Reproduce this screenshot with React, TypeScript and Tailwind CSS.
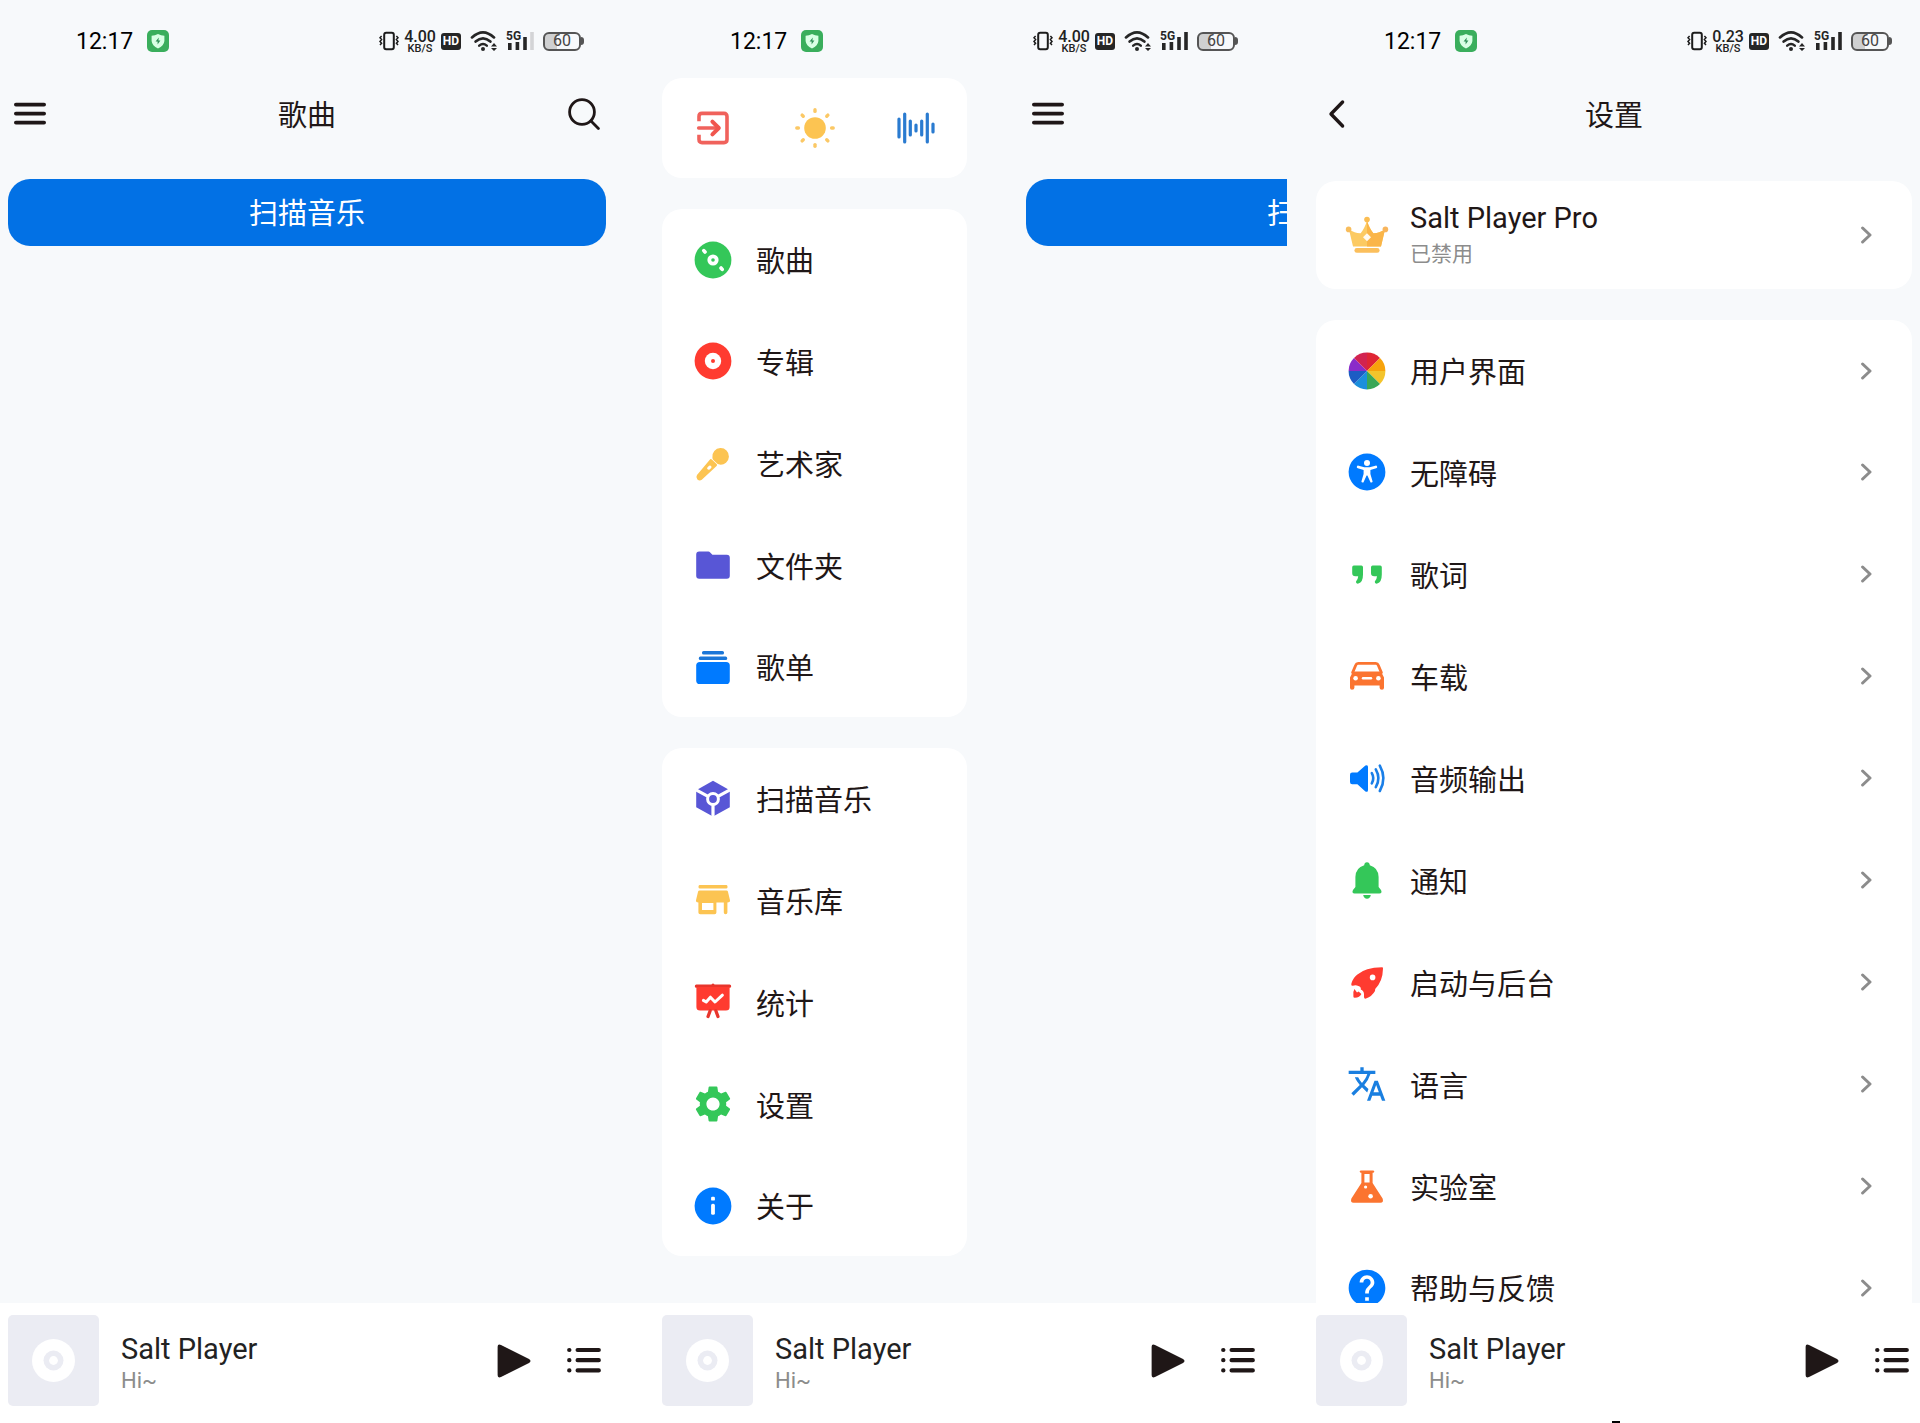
import type { ReactNode } from 'react'
import { MdHelp, MdSettings, MdTranslate } from 'react-icons/md'

const GREEN = '#34c759'
const RED = '#ff3b30'
const YELLOW = '#fcc452'
const PURPLE = '#5856d6'
const BLUE = '#007aff'
const ORANGE = '#fb7430'
const INK = '#1f1717'

/** 38px icon canvas with the origin in the middle. */
function Glyph({ children }: { children: ReactNode }) {
  return (
    <svg
      viewBox="-19 -19 38 38"
      className="size-[38px] shrink-0 overflow-visible"
      fill="none"
      strokeLinecap="round"
      strokeLinejoin="round"
      aria-hidden="true"
    >
      {children}
    </svg>
  )
}

/** Wraps a package icon so that it takes the same room as a Glyph. */
function Slot({ children }: { children: ReactNode }) {
  return (
    <span className="flex size-[38px] shrink-0 items-center justify-center">
      <span className="shrink-0">{children}</span>
    </span>
  )
}

const SongIcon = () => (
  <Glyph>
    <circle r="18.4" fill={GREEN} />
    <circle r="5.6" fill="#fff" />
    <circle r="1.8" fill={GREEN} />
    <path d="M-9.2 -9.4 L-8 -8 M8 8 L9.2 9.4" stroke="#fff" strokeWidth="3.6" />
  </Glyph>
)

const AlbumIcon = () => (
  <Glyph>
    <circle r="18.4" fill={RED} />
    <circle r="8.2" fill="#fff" />
    <circle r="2" fill={RED} />
  </Glyph>
)

const ArtistIcon = () => (
  <Glyph>
    <path d="M-0.6 -5.6 A8.3 8.3 0 1 1 6.6 1.6 Q4.6 1.4 3 -0.4 L0.6 -2.8 Q-0.7 -4.2 -0.6 -5.6 Z" fill={YELLOW} />
    <path
      fillRule="evenodd"
      d="M-2.8 -3.8 Q-2 -4.4 -1.2 -3.6 L3.6 1.1 Q4.6 2.1 3.6 3 L-11.2 16.8 Q-13.4 18.4 -15.6 16.6 Q-17.6 14.4 -16 12 Z M-5.6 4.4 a1.5 1.5 0 0 0 2.2 2 l1.6 -1.5 a1.5 1.5 0 0 0 -2.1 -2.1 Z"
      fill={YELLOW}
    />
  </Glyph>
)

const FolderIcon = () => (
  <Glyph>
    <path
      d="M-16.8 -10.4 Q-16.8 -13.4 -13.8 -13.4 H-4.6 Q-3.6 -13.4 -2.8 -12.6 L-0.6 -10.2 H13.8 Q16.8 -10.2 16.8 -7.2 V10.8 Q16.8 13.8 13.8 13.8 H-13.8 Q-16.8 13.8 -16.8 10.8 Z"
      fill={PURPLE}
    />
  </Glyph>
)

const PlaylistIcon = () => (
  <Glyph>
    <rect x="-11" y="-16" width="22" height="3.6" rx="1.6" fill="#1a76d8" />
    <rect x="-14.2" y="-10.4" width="28.4" height="3.4" rx="1.6" fill="#1a76d8" />
    <rect x="-16.8" y="-5" width="33.6" height="22" rx="3.6" fill={BLUE} />
  </Glyph>
)

const ScanIcon = () => (
  <Glyph>
    <path d="M0 -18.2 L16.8 -8.8 V8.2 L0 17.6 L-16.8 8.2 V-8.8 Z" fill={PURPLE} />
    <path d="M-17.4 -9.4 L-5 -2.6 M17.4 -9.4 L5 -2.6 M0 5 V18" stroke="#fff" strokeWidth="3.2" strokeLinecap="butt" />
    <circle r="5.4" fill={PURPLE} stroke="#fff" strokeWidth="3" />
  </Glyph>
)

const LibraryIcon = () => (
  <Glyph>
    <rect x="-14.4" y="-15" width="28.8" height="3.4" rx="1.2" fill={YELLOW} />
    <path
      fillRule="evenodd"
      d="M-13.4 -9.6 H13.4 Q14.6 -9.6 14.9 -8.4 L17 0.2 Q17.2 2.4 14.4 2.4 V12.6 Q14.4 14.2 12.6 14.2 Q10.8 14.2 10.8 12.6 V2.4 H3.4 V12.4 Q3.4 14.2 1.6 14.2 H-12.8 Q-14.6 14.2 -14.6 12.4 V2.4 Q-17.2 2.4 -17 0.2 L-14.9 -8.4 Q-14.6 -9.6 -13.4 -9.6 Z M-11 3 V10 H0.4 V3 Z"
      fill={YELLOW}
    />
  </Glyph>
)

const StatsIcon = () => (
  <Glyph>
    <path d="M-16.6 -15.8 H16.6 M0 -17 V-15" stroke="#e8352c" strokeWidth="3.2" />
    <path d="M-16.6 -15 H16.6 V5 Q16.6 8.6 13 8.6 H-13 Q-16.6 8.6 -16.6 5 Z" fill={RED} />
    <path d="M-2.8 8.6 L-5 14.6 M2.8 8.6 L5 14.6" stroke="#e8352c" strokeWidth="3.2" />
    <path d="M-9.6 -1.6 L-6.8 0 L-2.6 -4.8 L2 0 L9.4 -6.8" stroke="#fff" strokeWidth="3" />
  </Glyph>
)

const InfoIcon = () => (
  <Glyph>
    <circle r="18.4" fill={BLUE} />
    <rect x="-1.9" y="-9.2" width="3.8" height="3.8" rx="1.2" fill="#fff" />
    <rect x="-1.9" y="-2.2" width="3.8" height="11" rx="1.6" fill="#fff" />
  </Glyph>
)

const WheelIcon = () => {
  // clockwise from twelve o'clock
  const slices = ['#df2534', '#f7a30c', '#f3c42c', '#3aa757', '#1b8fdc', '#1c5cc4', '#8a2cc9', '#d22350']
  return (
    <Glyph>
      {slices.map((fill, i) => (
        <path key={fill} d="M0 0 V-18.4 A18.4 18.4 0 0 1 13.01 -13.01 Z" fill={fill} transform={`rotate(${i * 45})`} />
      ))}
    </Glyph>
  )
}

const AccessIcon = () => (
  <Glyph>
    <circle r="18.4" fill={BLUE} />
    <circle cy="-9" r="3" fill="#fff" />
    <path d="M-8.8 -5 L-3 -3.4 H3 L8.8 -5" stroke="#fff" strokeWidth="2.8" />
    <path d="M-3.4 -4 H3.4 V2 L5.6 9.4 Q5.4 11 3.6 10.4 L0.4 3.6 H-0.4 L-3.6 10.4 Q-5.4 11 -5.6 9.4 L-3.4 2 Z" fill="#fff" />
  </Glyph>
)

const LyricsIcon = () => {
  const quote =
    'M-14.8 -6.8 Q-14.8 -8.4 -13.2 -8.4 H-5.6 Q-4 -8.4 -4 -6.8 V0.4 Q-4 8 -8.6 9.6 Q-11.4 10 -11 7.6 Q-8.8 4.6 -8.8 2.2 H-11.6 Q-14.8 2.2 -14.8 -1 Z'
  return (
    <Glyph>
      <path d={quote} fill={GREEN} />
      <path d={quote} fill={GREEN} transform="translate(18.8 0)" />
    </Glyph>
  )
}

const CarIcon = () => (
  <Glyph>
    <path d="M-14.4 -3.4 L-11.2 -11 Q-10.6 -12.6 -8.8 -12.6 H8.8 Q10.6 -12.6 11.2 -11 L14.4 -3.4" stroke={ORANGE} strokeWidth="2.8" />
    <path
      d="M-14 -4.4 H14 L17 1.6 V11.8 Q17 13.8 15 13.8 Q12.6 13.8 12.6 11.8 V9.6 H-12.6 V11.8 Q-12.6 13.8 -15 13.8 Q-17 13.8 -17 11.8 V1.6 Z"
      fill={ORANGE}
    />
    <circle cx="-11.4" cy="2.2" r="2.3" fill="#fff" />
    <circle cx="11.4" cy="2.2" r="2.3" fill="#fff" />
    <path d="M-4 2.2 H4" stroke="#fff" strokeWidth="2.4" />
  </Glyph>
)

const VolumeIcon = () => (
  <Glyph>
    <path d="M-14.8 -5.4 H-9.6 L-1.6 -12.4 Q1 -13.8 1 -11 V12 Q1 14.8 -1.6 13.4 L-9.6 6.2 H-14.8 Q-17 6.2 -17 4 V-3.2 Q-17 -5.4 -14.8 -5.4 Z" fill={BLUE} />
    <path d="M4.8 -4.8 Q7.8 0.4 4.8 5.4" stroke="#1a7fe8" strokeWidth="2.6" />
    <path d="M8.8 -8.6 Q14 0.4 8.8 9.2" stroke="#1a7fe8" strokeWidth="2.6" />
    <path d="M12.8 -12.4 Q20 0.4 12.8 13" stroke="#1a7fe8" strokeWidth="2.6" />
  </Glyph>
)

const BellIcon = () => (
  <Glyph>
    <path
      d="M-2.8 -14.8 Q-2.6 -17.8 0 -17.8 Q2.6 -17.8 2.8 -14.8 Q11.4 -12.4 11.6 -3 V7 L14 10 Q15.6 13.4 12.4 13.4 H-12.4 Q-15.6 13.4 -14 10 L-11.6 7 V-3 Q-11.4 -12.4 -2.8 -14.8 Z"
      fill={GREEN}
    />
    <path d="M-3.8 15 H3.8 Q3 18.8 0 18.8 Q-3 18.8 -3.8 15 Z" fill={GREEN} />
  </Glyph>
)

const RocketIcon = () => (
  <Glyph>
    <path
      d="M15 -14.8 Q16.2 -14.8 16 -13.4 Q15.8 -0.6 8.2 7 L8 9 Q5 14.4 -1 16.6 Q-3 17 -3 15 V12 Q-3.2 8.4 -6.2 7.4 Q-5.8 4.6 -8.6 4 Q-11.4 2.8 -14.2 3.8 Q-16.4 4 -15.6 1.6 Q-13.8 -4.4 -9.6 -7.4 Q-2 -14.6 15 -14.8 Z"
      fill={RED}
    />
    <circle cx="5.6" cy="-4.6" r="2.8" fill="#fff" />
    <path d="M-12.6 7 L-10 10.4 L-8.4 9.4 L-5.6 12 Q-7.2 15.4 -12.2 15.8 Q-14 16 -13.6 14 Q-14.2 9.6 -12.6 7 Z" fill={RED} />
  </Glyph>
)

const FlaskIcon = () => (
  <Glyph>
    <path d="M-6 -14.4 H6" stroke={ORANGE} strokeWidth="2.4" />
    <path
      fillRule="evenodd"
      d="M-5.6 -14.4 H5.6 V-3 L15.6 12.6 Q17 16.8 13.4 16.8 H-13.4 Q-17 16.8 -15.6 12.6 L-5.6 -3 Z M-2.6 -12 V-3.4 H2.6 V-12 Z"
      fill={ORANGE}
    />
    <circle cx="-1.4" cy="1" r="1.6" fill="#fff" />
    <circle cx="3.6" cy="10.2" r="2.3" fill="#fff" />
  </Glyph>
)

const CrownIcon = () => (
  <Glyph>
    <path d="M0 -14 Q3 -5.4 6.4 -1.8 Q12 -1.6 18 -5.4 L14 11.4 H-14 L-18 -5.4 Q-12 -1.6 -6.4 -1.8 Q-3 -5.4 0 -14 Z" fill="#fcca62" />
    <path d="M0 -14 Q3 -5.4 6.4 -1.8 Q12 -1.6 18 -5.4 L14 11.4 H0 Z" fill="#fab548" />
    <circle cy="-15.4" r="2.8" fill="#fbbd52" />
    <circle cx="-18.4" cy="-5.6" r="2.8" fill="#f8bd5c" />
    <circle cx="18.4" cy="-5.6" r="2.8" fill="#f8b55c" />
    <path d="M0 -1.8 L4 2.2 L0 6.2 L-4 2.2 Z" fill="#fffaf0" />
    <rect x="-12.6" y="13" width="25.2" height="4.8" rx="2.4" fill="#fbbf5c" />
  </Glyph>
)

const ExitIcon = () => (
  <Glyph>
    <path d="M-14 -6.8 V-11.4 Q-14 -14.6 -11 -14.6 H11 Q14 -14.6 14 -11.6 V11.6 Q14 14.6 11 14.6 H-11 Q-14 14.6 -14 11.6 V6.8" stroke="#f0625c" strokeWidth="3.6" strokeLinecap="butt" />
    <path d="M-14.4 0 H5" stroke="#f0625c" strokeWidth="3.4" />
    <path d="M-0.6 -6.4 L5.8 0 L-0.6 6.4" stroke="#f0564e" strokeWidth="4" />
  </Glyph>
)

const SunIcon = () => (
  <Glyph>
    <circle r="10.8" fill={YELLOW} />
    {[0, 45, 90, 135, 180, 225, 270, 315].map(a => (
      <path key={a} d="M0 -16.6 V-18.2" stroke="#fbc865" strokeWidth="3.4" transform={`rotate(${a})`} />
    ))}
  </Glyph>
)

const WaveIcon = () => (
  <Glyph>
    <path
      d="M-17 -9 V9 M-11.3 -14 V14 M-5.7 -7 V7 M0 -3 V3 M5.7 -7 V7 M11.3 -14 V14 M17 -4 V4"
      stroke="#2a7bd0"
      strokeWidth="3.2"
    />
  </Glyph>
)

function Chevron() {
  return (
    <svg viewBox="0 0 12 20" className="ml-auto h-5 w-3 shrink-0" fill="none" aria-hidden="true">
      <path d="M2.6 3 L10 10 L2.6 17" stroke="#8c8c8c" strokeWidth="3" strokeLinecap="round" strokeLinejoin="round" />
    </svg>
  )
}

interface StatusBarProps {
  speed: string
  weakSignal?: boolean
  className: string
}

function StatusBar({ speed, weakSignal, className }: StatusBarProps) {
  return (
    <div className={`flex h-[70px] shrink-0 items-center justify-between pt-3 pl-[76px] ${className}`}>
      <div className="flex items-center gap-[14px]">
        <span className="pt-[2px] text-[23px] leading-6 text-black">12:17</span>
        <svg viewBox="0 0 22 22" className="size-[22px]" aria-hidden="true">
          <rect width="22" height="22" rx="5" fill="#3aae5c" />
          <path d="M11 4 Q14 5.6 17.4 5.8 V11 Q17 15.6 11 18.4 Q5 15.6 4.6 11 V5.8 Q8 5.6 11 4 Z" fill="#d8ffe4" />
          <path d="M11.8 7.4 L8.6 11.6 H10.6 V14.6 L13.4 10.4 H11.4 Z" fill="#2f8f58" />
        </svg>
      </div>
      <div className="flex items-center text-[#222]">
        <svg viewBox="0 0 20 20" className="size-5" fill="none" stroke="#1c1c1c" aria-hidden="true">
          <rect x="5.2" y="1.8" width="9.6" height="16.4" rx="2" strokeWidth="2" />
          <path d="M2.6 5 L1 6.8 L2.6 8.6 L1 10.4 L2.6 12.2 L1 14 M17.4 5 L19 6.8 L17.4 8.6 L19 10.4 L17.4 12.2 L19 14" strokeWidth="1.5" />
        </svg>
        <span className="flex w-[42px] flex-col items-center pt-[2px] font-medium">
          <span className="text-[16px] leading-[13px]">{speed}</span>
          <span className="text-[11px] leading-[11px]">KB/S</span>
        </span>
        <span className="mr-[9px] flex h-[17px] w-5 items-center justify-center rounded-[3px] bg-[#262626] text-[12px] leading-none font-bold text-white">
          HD
        </span>
        <svg viewBox="0 0 28 22" className="mr-2 h-[22px] w-7" fill="none" stroke="#262626" strokeLinecap="round" aria-hidden="true">
          <path d="M2 7.4 Q13 -2.8 24 7.4" strokeWidth="2.7" />
          <path d="M5.6 11.6 Q13 5 20.4 11.6" strokeWidth="2.7" />
          <path d="M9.2 15.6 Q13 12.4 16.8 15.6" strokeWidth="2.5" />
          <circle cx="13" cy="19" r="2" fill="#262626" stroke="none" />
          <path d="M24 13 L27 16.4 H21 Z M24 21 L27 18 H21 Z" fill="#262626" stroke="none" />
        </svg>
        <svg viewBox="0 0 28 22" className="mr-[9px] h-[22px] w-7" aria-hidden="true">
          <path d="M3.8 13 V20 M11.4 12 V20 M19 7 V20" stroke="#262626" strokeWidth="3.6" />
          <path d="M26 2 V20" stroke={weakSignal ? '#d3d4d6' : '#262626'} strokeWidth="3.6" />
          <text x="0" y="10" fontSize="12" fontWeight="700" fill="#262626">5G</text>
        </svg>
        <span className="flex h-[19px] w-[38px] items-center justify-center rounded-[6px] border-2 border-[#555] bg-gradient-to-r from-[#cfd0d1] from-35% to-[#f7f9fb] to-35% text-[16px] leading-none text-[#444]">
          60
        </span>
        <span className="h-2 w-[3px] rounded-r-sm bg-[#555]" />
      </div>
    </div>
  )
}

function MenuButton() {
  return (
    <button aria-label="菜单" className="w-8">
      <svg viewBox="0 0 32 24" className="h-6 w-8" stroke={INK} strokeWidth="3.8" strokeLinecap="round">
        <path d="M1.9 2.6 H30.1 M1.9 11.6 H30.1 M1.9 20.6 H30.1" />
      </svg>
    </button>
  )
}

function ScanButton() {
  return (
    <button className="h-[67px] w-full rounded-[22px] bg-[#0271e5] pt-1 text-[29px] leading-none text-white">
      扫描音乐
    </button>
  )
}

function MiniPlayer({ className }: { className: string }) {
  return (
    <div className={`flex min-w-0 items-center pl-2 ${className}`}>
      <svg viewBox="0 0 91 91" className="size-[91px] shrink-0" aria-hidden="true">
        <rect width="91" height="91" rx="5" fill="#ebecf3" />
        <circle cx="45.5" cy="45.5" r="21.5" fill="#fff" />
        <circle cx="45.5" cy="45.5" r="10" fill="#ebecf3" />
        <circle cx="45.5" cy="45.5" r="4.4" fill="#fff" />
      </svg>
      <div className="ml-[22px] pt-[5px]">
        <div className="text-[29px] leading-9 text-[#222]">Salt Player</div>
        <div className="text-[22px] leading-7 text-[#8c8c8c]">Hi~</div>
      </div>
      <button aria-label="播放" className="ml-auto">
        <svg viewBox="0 0 34 34" className="size-[34px]" fill={INK}>
          <path d="M0.6 3 Q0.6 -0.6 4 1 L32 15 Q35 17 32 19 L4 33 Q0.6 34.6 0.6 31 Z" />
        </svg>
      </button>
      <button aria-label="播放列表" className="ml-9">
        <svg viewBox="0 0 34 28" className="h-7 w-[34px]" stroke={INK} strokeWidth="4.2" strokeLinecap="round">
          <path d="M2.2 3 H2.4 M2.2 13.2 H2.4 M2.2 23.4 H2.4 M10.6 3 H31.8 M10.6 13.2 H31.8 M10.6 23.4 H31.8" />
        </svg>
      </button>
    </div>
  )
}

interface Item {
  label: string
  icon: ReactNode
}

const LIBRARY_ITEMS: Item[] = [
  { label: '歌曲', icon: <SongIcon /> },
  { label: '专辑', icon: <AlbumIcon /> },
  { label: '艺术家', icon: <ArtistIcon /> },
  { label: '文件夹', icon: <FolderIcon /> },
  { label: '歌单', icon: <PlaylistIcon /> },
]

const TOOL_ITEMS: Item[] = [
  { label: '扫描音乐', icon: <ScanIcon /> },
  { label: '音乐库', icon: <LibraryIcon /> },
  { label: '统计', icon: <StatsIcon /> },
  { label: '设置', icon: <Slot><MdSettings size={44} color={GREEN} /></Slot> },
  { label: '关于', icon: <InfoIcon /> },
]

const SETTING_ITEMS: Item[] = [
  { label: '用户界面', icon: <WheelIcon /> },
  { label: '无障碍', icon: <AccessIcon /> },
  { label: '歌词', icon: <LyricsIcon /> },
  { label: '车载', icon: <CarIcon /> },
  { label: '音频输出', icon: <VolumeIcon /> },
  { label: '通知', icon: <BellIcon /> },
  { label: '启动与后台', icon: <RocketIcon /> },
  { label: '语言', icon: <Slot><MdTranslate size={40} color="#1a7fe0" /></Slot> },
  { label: '实验室', icon: <FlaskIcon /> },
  { label: '帮助与反馈', icon: <Slot><MdHelp size={44} color={BLUE} /></Slot> },
]

function ItemCard({ items, chevron }: { items: Item[]; chevron?: boolean }) {
  return (
    <div className="shrink-0 rounded-[20px] bg-white">
      {items.map(item => (
        <button
          key={item.label}
          className="flex h-[102px] w-full items-center gap-6 pr-10 pl-8 text-left first:h-[101px] last:h-[101px]"
        >
          {item.icon}
          <span className="pt-[5px] text-[29px] leading-10">{item.label}</span>
          {chevron && <Chevron />}
        </button>
      ))}
    </div>
  )
}

function SongsScreen() {
  return (
    <section className="flex min-h-0 min-w-0 flex-col">
      <StatusBar speed="4.00" weakSignal className="pr-[70px]" />
      <div className="pr-10">
        <header className="grid h-[88px] grid-cols-[1fr_auto_1fr] items-center px-[14px]">
          <MenuButton />
          <h1 className="pt-1 text-[29px] leading-10">歌曲</h1>
          <button aria-label="搜索" className="justify-self-end">
            <svg viewBox="0 0 32 32" className="size-8" fill="none" stroke={INK} strokeWidth="2.8" strokeLinecap="round">
              <circle cx="14" cy="14" r="12.4" />
              <path d="M23 23 L30.4 30.4" />
            </svg>
          </button>
        </header>
        <div className="px-2 pt-[21px]">
          <ScanButton />
        </div>
      </div>
    </section>
  )
}

function DrawerScreen() {
  return (
    <section className="flex min-h-0 min-w-0 flex-col">
      <StatusBar speed="4.00" className="pr-[70px]" />
      <div className="flex min-h-0 flex-1">
        <nav className="flex w-[364px] shrink-0 flex-col gap-[31px] pt-2 pr-[51px] pl-2">
          <div className="flex h-[100px] shrink-0 items-center justify-between rounded-[20px] bg-white px-8">
            <button aria-label="退出"><ExitIcon /></button>
            <button aria-label="主题"><SunIcon /></button>
            <button aria-label="音效"><WaveIcon /></button>
          </div>
          <ItemCard items={LIBRARY_ITEMS} />
          <ItemCard items={TOOL_ITEMS} />
        </nav>
        {/* songs screen, pushed aside by the open drawer */}
        <div className="mr-[21px] min-w-0 flex-1 overflow-hidden">
          <div className="w-[614px]">
            <header className="flex h-[88px] items-center px-[14px]">
              <MenuButton />
            </header>
            <div className="px-2 pt-[21px]">
              <ScanButton />
            </div>
          </div>
        </div>
      </div>
    </section>
  )
}

function SettingsScreen() {
  return (
    <section className="flex min-h-0 min-w-0 flex-col overflow-hidden">
      <StatusBar speed="0.23" className="pr-7" />
      <header className="grid h-[88px] shrink-0 grid-cols-[1fr_auto_1fr] items-center px-5">
        <button aria-label="返回" className="w-[18px]">
          <svg viewBox="0 0 18 30" className="h-[30px] w-[18px]" fill="none" stroke={INK} strokeWidth="3.4" strokeLinecap="round" strokeLinejoin="round">
            <path d="M14.6 3 L3 15 L14.6 27" />
          </svg>
        </button>
        <h1 className="pt-1 text-[29px] leading-10">设置</h1>
      </header>
      <div className="flex min-h-0 flex-1 flex-col gap-[31px] pt-[23px] pr-2 pl-2">
        <button className="flex h-[108px] shrink-0 items-center gap-6 rounded-[20px] bg-white pr-10 pl-8 text-left">
          <CrownIcon />
          <span className="flex flex-col pt-[2px]">
            <span className="text-[29px] leading-9">Salt Player Pro</span>
            <span className="text-[21px] leading-9 text-[#8c8c8c]">已禁用</span>
          </span>
          <Chevron />
        </button>
        <ItemCard items={SETTING_ITEMS} chevron />
      </div>
    </section>
  )
}

export default function App() {
  return (
    <div className="flex h-screen flex-col overflow-hidden bg-[#f7f9fb] font-[Roboto,'Noto_Sans_CJK_SC',sans-serif] text-[#1f1717]">
      <main className="grid min-h-0 flex-1 grid-cols-[654fr_654fr_612fr] grid-rows-[minmax(0,1fr)]">
        <SongsScreen />
        <DrawerScreen />
        <SettingsScreen />
      </main>
      <footer className="shrink-0 bg-white pt-3">
        <div className="grid grid-cols-[654fr_654fr_612fr]">
          <MiniPlayer className="pr-[53px]" />
          <MiniPlayer className="pr-[53px]" />
          <MiniPlayer className="pr-[11px]" />
        </div>
        <div className="grid grid-cols-[1612fr_308fr] pt-[15px]">
          <span className="col-start-2 h-[2px] w-2 bg-black" />
        </div>
      </footer>
    </div>
  )
}
